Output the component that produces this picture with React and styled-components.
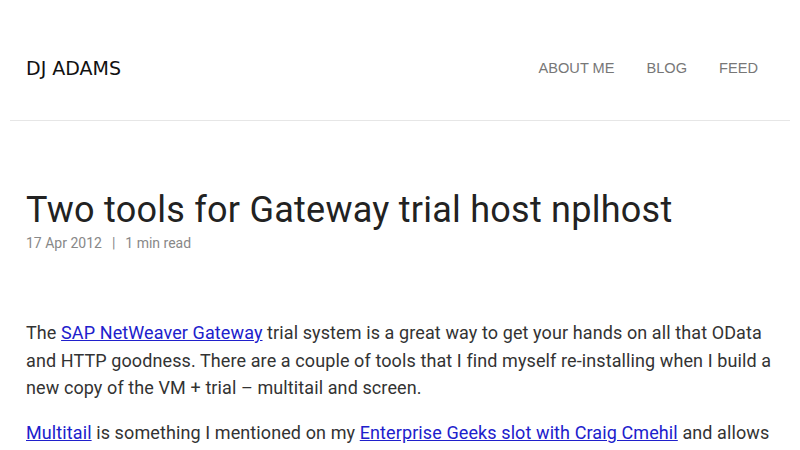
import React from "react";
import styled, { createGlobalStyle } from "styled-components";

const GlobalStyle = createGlobalStyle`
  html, body {
    margin: 0;
    padding: 0;
    background: #fff;
  }
  body {
    font-family: Roboto, sans-serif;
    color: #333;
  }
`;

const Page = styled.div`
  padding: 0 10px;
`;

const Header = styled.header`
  display: flex;
  justify-content: space-between;
  align-items: center;
  height: 121px;
  padding: 16px 16px 0;
  border-bottom: 1px solid #e6e6e6;
  box-sizing: border-box;
`;

const SiteTitle = styled.a`
  font-family: "DejaVu Sans", sans-serif;
  font-size: 19px;
  color: #111;
  text-decoration: none;
`;

const Nav = styled.nav`
  display: flex;
  gap: 32px;
  margin-right: 16px;
`;

const NavLink = styled.a`
  font-family: "Liberation Sans", sans-serif;
  font-size: 14.6px;
  color: #777;
  text-decoration: none;
`;

const Article = styled.article`
  padding: 0 16px;
`;

const Title = styled.h1`
  font-family: Roboto, sans-serif;
  font-weight: 400;
  font-size: 36px;
  letter-spacing: 0.25px;
  color: #222;
  margin: 67px 0 0;
  line-height: 44px;
`;

const Meta = styled.div`
  font-size: 14px;
  color: #888;
  margin-top: 3px;
`;

const Sep = styled.span`
  margin: 0 10px;
`;

const Body = styled.div`
  margin-top: 68px;
  font-size: 18px;
  line-height: 27.5px;
  letter-spacing: 0.1px;
  color: #333;
`;

const Para = styled.p`
  margin: 0 0 17px;
`;

const Link = styled.a`
  color: #2020cc;
`;

export default function App() {
  return (
    <>
      <GlobalStyle />
      <Page>
        <Header>
          <SiteTitle href="#">DJ ADAMS</SiteTitle>
          <Nav>
            <NavLink href="#">ABOUT ME</NavLink>
            <NavLink href="#">BLOG</NavLink>
            <NavLink href="#">FEED</NavLink>
          </Nav>
        </Header>
        <Article>
          <Title>Two tools for Gateway trial host nplhost</Title>
          <Meta>
            17 Apr 2012<Sep>|</Sep>1 min read
          </Meta>
          <Body>
            <Para>
              The <Link href="#">SAP NetWeaver Gateway</Link> trial system is a
              great way to get your hands on all that OData and HTTP goodness.
              There are a couple of tools that I find myself re-installing when
              I build a new copy of the VM + trial – multitail and screen.
            </Para>
            <Para>
              <Link href="#">Multitail</Link> is something I mentioned on my{" "}
              <Link href="#">Enterprise Geeks slot with Craig Cmehil</Link> and
              allows you to view multiple log files at once.
            </Para>
          </Body>
        </Article>
      </Page>
    </>
  );
}
